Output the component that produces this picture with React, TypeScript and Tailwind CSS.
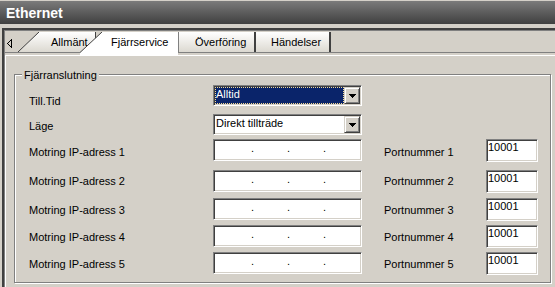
import React from "react";

const sunken =
  "border border-t-[#808080] border-l-[#808080] border-r-white border-b-white shadow-[inset_1px_1px_0_#404040,inset_-1px_-1px_0_#d4d0c8] p-px bg-white";

type IpRow = {
  label: string;
  port: string;
  rowClass: string;
  labelClass: string;
};

const ipRows: IpRow[] = [
  { label: "Motring IP-adress 1", port: "Portnummer 1", rowClass: "mt-[4px]", labelClass: "pt-[7px]" },
  { label: "Motring IP-adress 2", port: "Portnummer 2", rowClass: "mt-[8px]", labelClass: "pt-[5px]" },
  { label: "Motring IP-adress 3", port: "Portnummer 3", rowClass: "mt-[5px]", labelClass: "pt-[6px]" },
  { label: "Motring IP-adress 4", port: "Portnummer 4", rowClass: "mt-[4px]", labelClass: "pt-[6px]" },
  { label: "Motring IP-adress 5", port: "Portnummer 5", rowClass: "mt-[4px]", labelClass: "pt-[6px]" },
];

function DropArrow() {
  return (
    <svg width="7" height="4" viewBox="0 0 7 4" shapeRendering="crispEdges">
      <rect x="0" y="0" width="7" height="1" fill="#000" />
      <rect x="1" y="1" width="5" height="1" fill="#000" />
      <rect x="2" y="2" width="3" height="1" fill="#000" />
      <rect x="3" y="3" width="1" height="1" fill="#000" />
    </svg>
  );
}

function Combo({ value, selected }: { value: string; selected?: boolean }) {
  return (
    <div className={`w-[149px] h-[21px] flex ${sunken}`}>
      <div
        className={`flex-1 border leading-[13px] ${
          selected
            ? "bg-[#0a246a] text-white border-dotted border-[#f5db95]"
            : "border-transparent text-black"
        }`}
      >
        {value}
      </div>
      <div className="w-[16px] h-full flex items-center justify-center bg-[#d4d0c8] border border-t-[#d4d0c8] border-l-[#d4d0c8] border-r-[#404040] border-b-[#404040] shadow-[inset_1px_1px_0_#fff,inset_-1px_-1px_0_#808080]">
        <DropArrow />
      </div>
    </div>
  );
}

function IpBox() {
  return (
    <div className={`w-[149px] h-[22px] flex items-start pt-[2px] leading-[13px] ${sunken}`}>
      <span className="w-[36px]" />
      <span className="w-[3px] text-center">.</span>
      <span className="w-[33px]" />
      <span className="w-[3px] text-center">.</span>
      <span className="w-[33px]" />
      <span className="w-[3px] text-center">.</span>
    </div>
  );
}

function SlantTab({ active }: { active?: boolean }) {
  if (active) {
    return (
      <svg width="22" height="24" viewBox="0 0 22 24" className="shrink-0">
        <polygon points="0,20.5 22,0 22,24 0,24" fill="#fff" />
        <line x1="0" y1="20.5" x2="22" y2="0" stroke="#404040" strokeWidth="1" />
      </svg>
    );
  }
  return (
    <svg width="21" height="20" viewBox="0 0 21 20" className="shrink-0">
      <defs>
        <linearGradient id="tabgrad" x1="0" y1="0" x2="0" y2="1">
          <stop offset="0" stopColor="#ffffff" />
          <stop offset="1" stopColor="#dcd9d1" />
        </linearGradient>
      </defs>
      <polygon points="0,20 21,0 21,20" fill="url(#tabgrad)" />
      <line x1="0" y1="20" x2="21" y2="0" stroke="#404040" strokeWidth="1" />
    </svg>
  );
}

export default function App() {
  return (
    <div className="w-[555px] h-[287px] overflow-hidden bg-[#d4d0c8] text-[11px] text-black font-['Liberation_Sans',Arial,sans-serif]">
      <div className="pt-px">
        <div className="h-[23px] flex items-center pl-[6px] bg-gradient-to-b from-[#7b7b7b] to-[#404040] text-white font-bold text-[14px] leading-[16px]">
          Ethernet
        </div>
      </div>

      <div className="mt-[4px] ml-[2px] h-[300px] border-t-2 border-l-2 border-t-[#404040] border-l-[#404040] shadow-[inset_1px_1px_0_#808080]">
        {/* tab strip */}
        <div className="pt-[2px]">
          <div className="flex items-start h-[21px] border-b border-[#808080]">
            <div className="w-[14px] h-[20px] flex items-center pl-[3px] pt-[2px]">
              <svg width="5" height="9" viewBox="0 0 5 9" shapeRendering="crispEdges">
                <polyline points="4.5,0.5 0.5,4.5 4.5,8.5 4.5,0.5" fill="none" stroke="#000" strokeWidth="1" />
              </svg>
            </div>

            <div className="flex h-[20px]">
              <SlantTab />
              <div className="w-[57px] h-full pt-[4px] pl-[12px] leading-[13px] bg-gradient-to-b from-white to-[#dcd9d1] border-r border-[#404040]">
                Allmänt
              </div>
            </div>

            <div className="relative z-10 -ml-[16px] flex h-[24px]">
              <SlantTab active />
              <div className="w-[76px] h-full pt-[4px] pl-[9px] leading-[13px] bg-white">
                Fjärrservice
              </div>
            </div>

            <div className="flex h-[20px] w-[78px] border-l border-[#808080] border-r-2 border-r-[#404040] bg-gradient-to-b from-white to-[#dcd9d1] pt-[4px] pl-[16px] leading-[13px]">
              Överföring
            </div>

            <div className="flex h-[20px] w-[75px] border-r-2 border-r-[#404040] bg-gradient-to-b from-white to-[#dcd9d1] pt-[4px] pl-[15px] leading-[13px]">
              Händelser
            </div>
          </div>
        </div>

        {/* page */}
        <div className="mt-[2px] ml-px h-[260px] border-t border-l border-white">
          <div className="relative mt-[18px] ml-[8px] w-[537px] h-[209px] border border-[#808080] shadow-[inset_1px_1px_0_#fff,1px_1px_0_#fff]">
            <div className="absolute left-[7px] -top-[6px] px-[2px] bg-[#d4d0c8] leading-[13px]">
              Fjärranslutning
            </div>

            <div className="mt-[10px] flex items-start">
              <div className="w-[198px] pl-[14px] pt-[10px] leading-[13px]">Till.Tid</div>
              <Combo value="Alltid" selected />
            </div>

            <div className="mt-[6px] flex items-start">
              <div className="w-[198px] pl-[14px] pt-[6px] leading-[13px]">Läge</div>
              <Combo value="Direkt tillträde" />
            </div>

            {ipRows.map((row) => (
              <div key={row.label} className={`flex items-start h-[23px] ${row.rowClass}`}>
                <div className={`w-[198px] pl-[14px] leading-[13px] ${row.labelClass}`}>{row.label}</div>
                <IpBox />
                <div className={`w-[102px] ml-[22px] leading-[13px] ${row.labelClass}`}>{row.port}</div>
                <div className={`w-[52px] h-[23px] pt-px pl-px leading-[13px] ${sunken}`}>10001</div>
              </div>
            ))}
          </div>
        </div>
      </div>
    </div>
  );
}
